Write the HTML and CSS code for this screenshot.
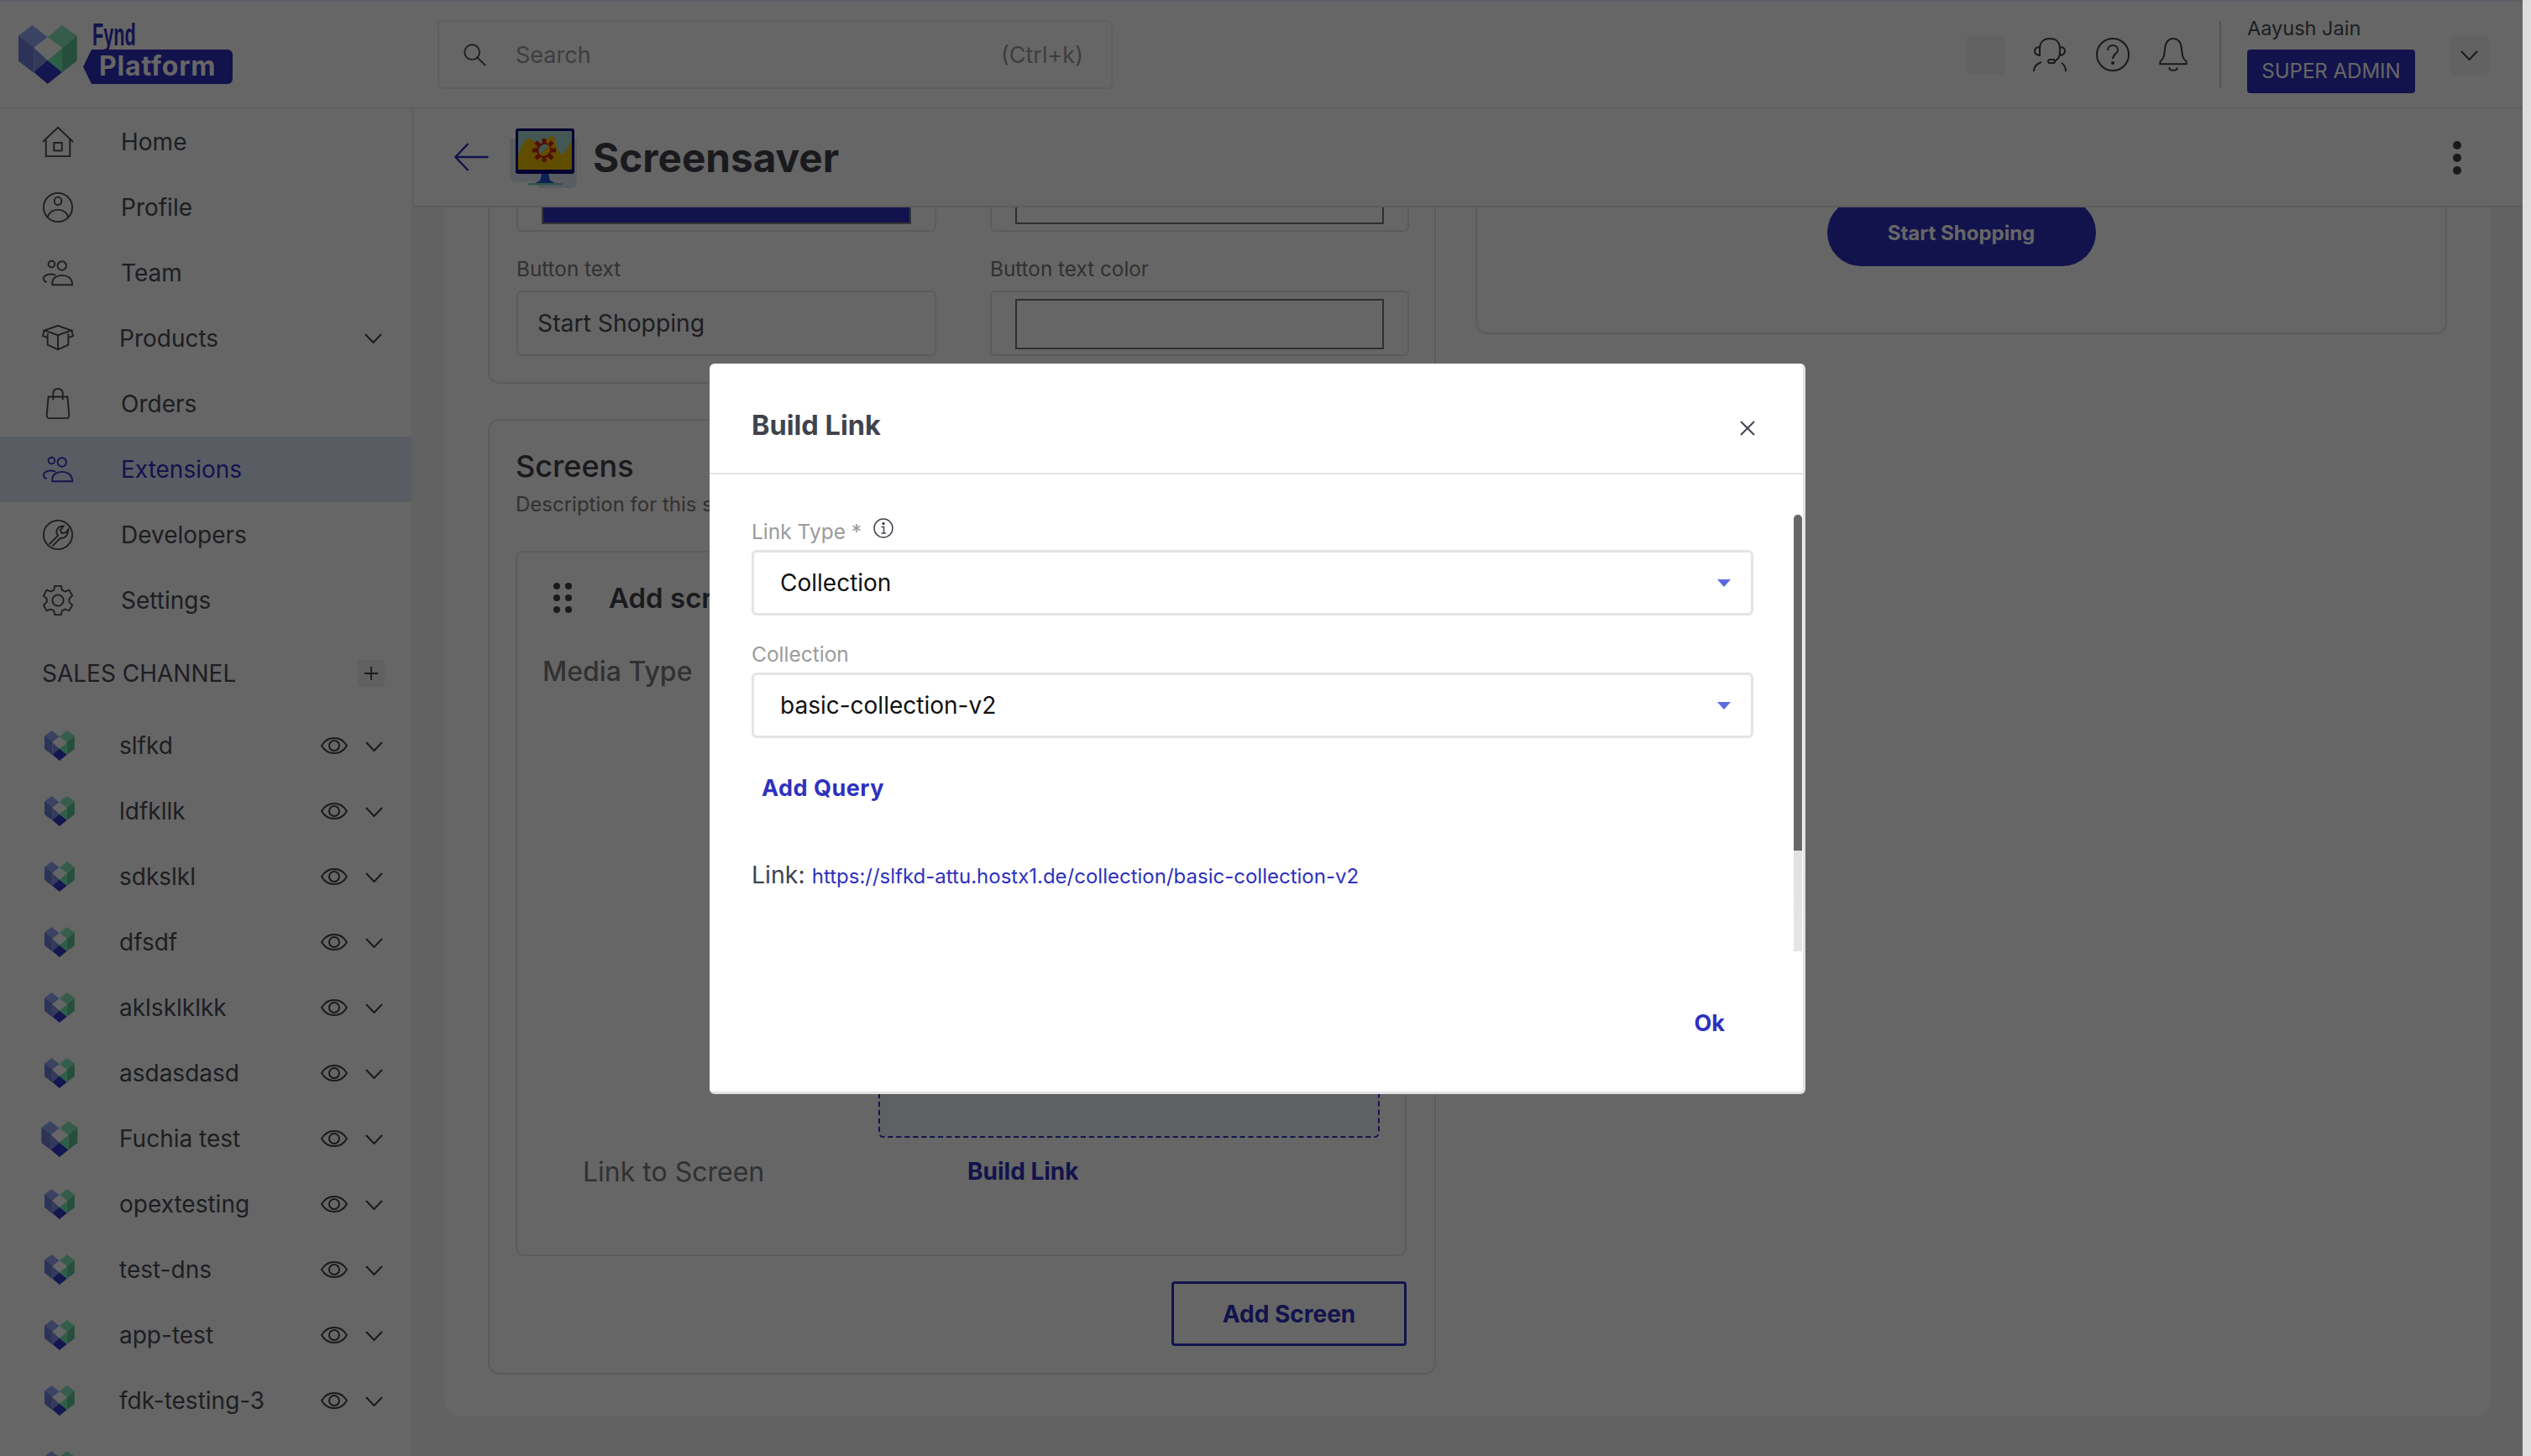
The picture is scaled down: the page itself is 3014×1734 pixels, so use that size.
FILE: index.html
```html
<!DOCTYPE html>
<html lang="en">
<head>
<meta charset="utf-8">
<title>Screensaver</title>
<link rel="stylesheet" href="styles.css">
</head>
<body>
<svg class="defs" width="0" height="0" aria-hidden="true">
  <symbol id="heart" viewBox="0 0 210 210">
    <path class="h1" d="M0 38 49 0 104 43 55 80 0 128Z"/>
    <path class="h2" d="M0 38 55 80 55 170 0 128Z"/>
    <path class="h3" d="M55 80 104 125 55 170Z"/>
    <path class="h4" d="M55 168 104 125 156 168 104 210Z"/>
    <path class="h5" d="M104 43 156 0 209 38 156 82Z"/>
    <path class="h6" d="M156 82 209 38 209 128 156 168Z"/>
    <path class="h7" d="M104 125 156 82 156 168Z"/>
    <path class="h8" d="M56 81 104 43 156 81 104 125Z"/>
  </symbol>
  <symbol id="eye" viewBox="0 0 32 22"><path d="M1 11C8-1 24-1 31 11 24 23 8 23 1 11Z"/><circle cx="16" cy="11" r="6"/></symbol>
  <symbol id="chev" viewBox="0 0 21 12"><path d="M1 1 10.500 11 20 1"/></symbol>
  <symbol id="people" viewBox="0 0 40 34"><circle cx="12" cy="6" r="4"/><circle cx="25" cy="8" r="5.500"/><path d="M6 28H4C1 26 1 22 5 20 8 18 14 18 17 20"/><path d="M13 32C12 23 19 20 25 20S38 23 38 32Z"/></symbol>
</svg>

<div class="app">
  <header class="top">
    <div class="logo">
      <svg class="logo-heart"><use href="#heart"/></svg>
      <div class="logo-text">
        <span class="fynd">Fynd</span>
        <span class="tag">Platform</span>
      </div>
    </div>
    <div class="search">
      <svg class="search-icon" viewBox="0 0 32 32"><circle cx="13" cy="13" r="9.500"/><path d="M20 20 30 30"/></svg>
      <span class="search-text">Search</span>
      <span class="search-key">(Ctrl+k)</span>
    </div>
    <div class="top-right">
      <span class="ghost"></span>
      <svg class="top-icon support" viewBox="0 0 40 40"><path d="M8 17V13C8 5 13 1 20 1S32 5 32 13V17C32 24 28 27 25 28"/><path d="M8 11C3 11 2 14 2 16S4 21 8 21V17M32 11C37 11 38 14 38 16S36 21 32 21V17"/><rect x="18" y="26" width="8" height="4" rx="2"/><path d="M1 40C1 34 4 31 10 29M39 40C39 34 37 32 34 30"/></svg>
      <svg class="top-icon help" viewBox="0 0 40 40"><circle cx="20" cy="20" r="19"/><path d="M14 15C14 11 17 9 20 9S26 11 26 15C26 19 20 19 20 25"/><circle class="solid" cx="20" cy="30" r="1"/></svg>
      <svg class="top-icon bell" viewBox="0 0 34 42"><path d="M1 32V29C6 25 6 21 7 12 8 5 11 1 17 1S26 5 27 12C28 21 28 25 33 29V32Z"/><path d="M12 36C12 41 22 41 22 36"/></svg>
      <span class="divider"></span>
      <div class="user">
        <span class="user-name">Aayush Jain</span>
        <span class="user-role">SUPER ADMIN</span>
      </div>
      <span class="ghost user-menu"><svg class="chev"><use href="#chev"/></svg></span>
    </div>
  </header>

  <div class="columns">
    <aside class="side">
      <nav class="nav">
        <a class="nav-row"><svg class="nav-icon" viewBox="0 0 40 40"><path d="M1 20 20 2 39 20M5 17V38H35V17"/><rect x="15" y="21" width="10" height="10"/></svg><span>Home</span></a>
        <a class="nav-row"><svg class="nav-icon" viewBox="0 0 40 40"><circle cx="20" cy="20" r="18"/><ellipse cx="20" cy="12" rx="4.500" ry="5"/><path d="M7 32C10 24 15 23 20 23S30 24 33 32"/></svg><span>Profile</span></a>
        <a class="nav-row"><svg class="nav-icon"><use href="#people"/></svg><span>Team</span></a>
        <a class="nav-row nudged"><svg class="nav-icon" viewBox="0 0 40 34"><path d="M20 1 37 7 20 13 3 7Z"/><path d="M3 7 1 14 7 16M37 7 39 14 33 16M7 11V25L20 31 33 25V11M20 13V31"/></svg><span>Products</span><svg class="chev nav-chev"><use href="#chev"/></svg></a>
        <a class="nav-row"><svg class="nav-icon" viewBox="0 0 40 40"><path d="M8 11H32L34 34C34 36 33 38 31 38H9C7 38 6 36 6 34Z"/><path d="M14 15V7C14 3 16 1 20 1S26 3 26 7V15"/></svg><span>Orders</span></a>
        <a class="nav-row active"><svg class="nav-icon"><use href="#people"/></svg><span>Extensions</span></a>
        <a class="nav-row"><svg class="nav-icon" viewBox="0 0 40 40"><circle cx="20" cy="20" r="18"/><path d="M9 32 20 21C16 15 20 9 27 9L23 14 25 18 30 17 33 13C33 21 28 25 23 24L13 34"/></svg><span>Developers</span></a>
        <a class="nav-row"><svg class="nav-icon" viewBox="0 0 40 40"><circle cx="20" cy="20" r="7"/><path d="M16 2H24L25 7 29 9 34 7 38 14 34 18V22L38 26 34 33 29 31 25 33 24 38H16L15 33 11 31 6 33 2 26 6 22V18L2 14 6 7 11 9 15 7Z"/></svg><span>Settings</span></a>
      </nav>
      <div class="channel-head">
        <span>SALES CHANNEL</span>
        <span class="plus"><svg viewBox="0 0 20 20"><path d="M10 1V19M1 10H19"/></svg></span>
      </div>
      <ul class="channels">
        <li class="chan"><svg class="chan-heart"><use href="#heart"/></svg><span class="chan-name">slfkd</span><svg class="eye"><use href="#eye"/></svg><svg class="chev"><use href="#chev"/></svg></li>
        <li class="chan"><svg class="chan-heart"><use href="#heart"/></svg><span class="chan-name">ldfkllk</span><svg class="eye"><use href="#eye"/></svg><svg class="chev"><use href="#chev"/></svg></li>
        <li class="chan"><svg class="chan-heart"><use href="#heart"/></svg><span class="chan-name">sdkslkl</span><svg class="eye"><use href="#eye"/></svg><svg class="chev"><use href="#chev"/></svg></li>
        <li class="chan"><svg class="chan-heart"><use href="#heart"/></svg><span class="chan-name">dfsdf</span><svg class="eye"><use href="#eye"/></svg><svg class="chev"><use href="#chev"/></svg></li>
        <li class="chan"><svg class="chan-heart"><use href="#heart"/></svg><span class="chan-name">aklsklklkk</span><svg class="eye"><use href="#eye"/></svg><svg class="chev"><use href="#chev"/></svg></li>
        <li class="chan"><svg class="chan-heart"><use href="#heart"/></svg><span class="chan-name">asdasdasd</span><svg class="eye"><use href="#eye"/></svg><svg class="chev"><use href="#chev"/></svg></li>
        <li class="chan big"><svg class="chan-heart"><use href="#heart"/></svg><span class="chan-name">Fuchia test</span><svg class="eye"><use href="#eye"/></svg><svg class="chev"><use href="#chev"/></svg></li>
        <li class="chan"><svg class="chan-heart"><use href="#heart"/></svg><span class="chan-name">opextesting</span><svg class="eye"><use href="#eye"/></svg><svg class="chev"><use href="#chev"/></svg></li>
        <li class="chan"><svg class="chan-heart"><use href="#heart"/></svg><span class="chan-name">test-dns</span><svg class="eye"><use href="#eye"/></svg><svg class="chev"><use href="#chev"/></svg></li>
        <li class="chan"><svg class="chan-heart"><use href="#heart"/></svg><span class="chan-name">app-test</span><svg class="eye"><use href="#eye"/></svg><svg class="chev"><use href="#chev"/></svg></li>
        <li class="chan"><svg class="chan-heart"><use href="#heart"/></svg><span class="chan-name">fdk-testing-3</span><svg class="eye"><use href="#eye"/></svg><svg class="chev"><use href="#chev"/></svg></li>
        <li class="chan"><svg class="chan-heart"><use href="#heart"/></svg></li>
      </ul>
    </aside>

    <main class="main">
      <div class="subhead">
        <svg class="back" viewBox="0 0 42 34"><path d="M17 1 2 17 17 33M2 17H41"/></svg>
        <svg class="screen-icon" viewBox="0 0 80 72">
          <path class="s-blob" d="M0 12H76C80 12 80 14 80 18V60C80 68 78 71 72 71H34V63H8C2 63 0 60 0 54Z"/>
          <rect class="s-frame" x="7" y="0" width="70" height="54" rx="3"/>
          <rect class="s-sky" x="10" y="3" width="64" height="46"/>
          <path class="s-sand" d="M10 46V32C14 22 17 12 24 12 29 12 30 20 36 20 42 20 44 9 50 9 56 9 55 30 62 30 68 30 71 18 74 13V46C74 48 73 49 71 49H13C11 49 10 48 10 46Z"/>
          <path class="s-stand" d="M38 54H46L48 62 54 65H30L36 62Z"/>
          <rect class="s-base" x="22" y="65" width="41" height="2.500" rx="1"/>
          <circle class="s-gear" cx="41" cy="26" r="9"/>
          <path class="s-teeth" d="M41 12V40M27 26H55M31 16 51 36M51 16 31 36"/>
          <path class="s-hole" d="M47 20 36 31C33 27 34 20 41 19 43 19 45 19 47 20Z"/>
          <path class="s-holeb" d="M47 20C49 24 48 29 44 32 41 33 38 33 36 31Z"/>
        </svg>
        <h1 class="page-title">Screensaver</h1>
        <span class="kebab"><i></i><i></i><i></i></span>
      </div>
      <div class="scroll">
        <div class="panel">
          <div class="left-col">
            <section class="card form-card">
              <div class="form-grid">
                <div class="field"><span class="swatch swatch-blue"></span></div>
                <div class="field"><span class="swatch"></span></div>
                <div class="field-block"><label class="f-label">Button text</label><div class="field field-text">Start Shopping</div></div>
                <div class="field-block"><label class="f-label">Button text color</label><div class="field"><span class="swatch swatch-tall"></span></div></div>
              </div>
            </section>
            <section class="card screens-card">
              <h2 class="screens-title">Screens</h2>
              <p class="screens-desc">Description for this screen</p>
              <div class="screen-box">
                <div class="screen-head">
                  <span class="grip"><i></i><i></i><i></i><i></i><i></i><i></i></span>
                  <span class="screen-name">Add screen</span>
                </div>
                <div class="media-row">
                  <span class="media-label">Media Type</span>
                  <div class="dropzone"></div>
                </div>
                <div class="link-row">
                  <span class="link-label">Link to Screen</span>
                  <a class="build-link">Build Link</a>
                </div>
              </div>
              <div class="screens-foot"><button class="add-screen">Add Screen</button></div>
            </section>
          </div>
          <section class="card preview-card"><span class="shop-btn">Start Shopping</span></section>
        </div>
      </div>
    </main>
  </div>

  <div class="overlay"></div>
  <div class="page-bar"></div>

  <div class="modal">
    <div class="modal-head">
      <h3 class="modal-title">Build Link</h3>
      <svg class="modal-close" viewBox="0 0 18 18"><path d="M1 1 17 17M17 1 1 17"/></svg>
    </div>
    <div class="modal-body">
      <div class="m-label m-first"><span>Link Type *</span>
        <svg class="info" viewBox="0 0 24 24"><circle cx="12" cy="12" r="11"/><path d="M9.500 10.500H12.500V18M9.500 18H15"/><circle class="solid" cx="12" cy="6.500" r="1"/></svg>
      </div>
      <div class="select"><span>Collection</span><i class="caret"></i></div>
      <div class="m-label"><span>Collection</span></div>
      <div class="select"><span>basic-collection-v2</span><i class="caret"></i></div>
      <a class="add-query">Add Query</a>
      <p class="link-line">Link: <a class="link-url">https://slfkd-attu.hostx1.de/collection/basic-collection-v2</a></p>
      <div class="modal-foot"><a class="ok">Ok</a></div>
    </div>
    <div class="m-scroll"><span class="m-thumb"></span></div>
  </div>
</div>
</body>
</html>
```

FILE: styles.css
```css
* { box-sizing: border-box; }
html, body { margin: 0; padding: 0; }
body { font-family: Inter, "Noto Sans", "Liberation Sans", sans-serif; color: #4a4c55; background: #fff; overflow: hidden; }
.defs { position: absolute; }
svg { display: block; fill: none; stroke: currentColor; stroke-width: 2; }
.solid { fill: currentColor; }
.h1 { fill: #93A8F5; stroke: none; } .h2 { fill: #6F80D8; stroke: none; } .h3 { fill: #8094E6; stroke: none; }
.h4 { fill: #3237C8; stroke: none; } .h5 { fill: #88E8BC; stroke: none; } .h6 { fill: #5CC49A; stroke: none; }
.h7 { fill: #6FEFB0; stroke: none; } .h8 { fill: #fff; stroke: none; }

.app { position: relative; width: 3014px; height: 1734px; overflow: hidden; display: flex; flex-direction: column; }

/* top bar */
.top { height: 130px; flex: none; display: flex; align-items: center; background: #fff; border-top: 2px solid #eaeaff; border-bottom: 2px solid #ededed; padding-right: 10px; }
.logo { width: 521px; flex: none; display: flex; padding-left: 22px; align-items: flex-start; }
.logo-heart { width: 70px; height: 70px; }
.logo-text { display: flex; flex-direction: column; margin-left: 7px; margin-top: -4px; }
.fynd { font-family: "Liberation Sans", sans-serif; font-weight: 700; font-size: 36px; line-height: 32px; height: 33px; color: #2e31be; margin-left: 11px; transform-origin: left center; transform: scaleX(.6); }
.tag { position: relative; width: 178px; height: 41px; background: #2e31be; color: #fff; border-radius: 0 6px 6px 0; clip-path: polygon(10px 0, 100% 0, 100% 100%, 10px 100%, 0 50%); font-family: Inter, sans-serif; font-weight: 700; font-size: 32px; line-height: 40px; padding-left: 19px; letter-spacing: .8px; }
.search { width: 804px; height: 82px; flex: none; display: flex; align-items: center; border: 2px solid #ededed; border-radius: 6px; padding: 0 33px 0 27px; font-size: 27px; color: #9b9b9b; }
.search-icon { width: 30px; height: 30px; color: #4a4c55; }
.search-text { margin-left: 34px; flex: 1; }
.top-right { flex: 1; display: flex; align-items: center; padding-left: 1016px; }
.ghost { width: 47px; height: 47px; flex: none; background: #f6f6f6; border-radius: 6px; }
.top-icon { flex: none; height: 40px; color: #3f4148; }
.support { width: 40px; margin-left: 33px; }
.help { width: 40px; margin-left: 35px; }
.bell { width: 34px; height: 41px; margin-left: 35px; }
.divider { width: 2px; height: 80px; background: #cfcfcf; margin-left: 38px; flex: none; }
.user { display: flex; flex-direction: column; margin-left: 31px; width: 200px; flex: none; }
.user-name { font-size: 23.500px; line-height: 30px; color: #4a4c55; }
.user-role { margin-top: 10px; height: 52px; background: #2e31be; color: #fff; border-radius: 4px; font-size: 24px; line-height: 52px; text-align: center; }
.user-menu { margin-left: 41px; height: 48px; display: flex; align-items: center; justify-content: center; margin-top: 1px; }

.columns { flex: 1; display: flex; min-height: 0; }

/* sidebar */
.side { width: 493px; flex: none; background: #fff; border-right: 3px solid #f2f2f2; overflow: hidden; }
.nav { padding-top: 0; }
.nav-row { height: 78px; display: flex; align-items: center; padding-left: 50px; font-size: 28px; color: #4a4c55; }
.nav-row > span { margin-left: 56px; flex: 1; }
.nav-icon { width: 38px; height: 38px; flex: none; }
.nudged > span { margin-left: 54px; }
.nav-chev { margin-right: 35px; }
.active { background: #e1e6f7; color: #2e31be; }
.chev { width: 21px; height: 12px; flex: none; color: #3f4148; }
.channel-head { display: flex; align-items: center; justify-content: space-between; height: 32px; margin-top: 32px; padding: 0 32px 0 50px; font-size: 28px; color: #4a4c55; }
.plus { width: 32px; height: 32px; background: #f0f0f0; border-radius: 4px; display: flex; align-items: center; justify-content: center; color: #3f4148; }
.plus svg { width: 18px; height: 18px; }
.channels { list-style: none; margin: 31px 0 0; padding: 0; }
.chan { height: 78px; display: flex; align-items: center; padding-left: 52px; font-size: 28px; }
.chan .h1 { fill: #9484F0; } .chan .h2 { fill: #7869DC; } .chan .h3 { fill: #8878E8; } .chan .h4 { fill: #7150E8; }
.chan .h5 { fill: #80DCE4; } .chan .h6 { fill: #48B8C8; } .chan .h7 { fill: #58C8D4; }
.chan.big .h1 { fill: #93A8F5; } .chan.big .h2 { fill: #6F80D8; } .chan.big .h3 { fill: #8094E6; } .chan.big .h4 { fill: #2A2FD8; }
.chan.big .h5 { fill: #88E8BC; } .chan.big .h6 { fill: #5CC49A; } .chan.big .h7 { fill: #6FEFB0; }
.chan-heart { width: 38px; height: 36px; flex: none; }
.chan.big { padding-left: 49px; }
.chan.big .chan-heart { width: 44px; height: 43px; }
.chan-name { flex: 1; margin-left: 52px; }
.chan.big .chan-name { margin-left: 49px; }
.eye { width: 32px; height: 22px; flex: none; color: #3f4148; }
.chan .chev { margin: 2px 34px 0 21px; }

/* main */
.main { flex: 1; display: flex; flex-direction: column; min-width: 0; margin-right: 10px; background: #f5f5f5; }
.subhead { height: 117px; flex: none; position: relative; z-index: 2; display: flex; align-items: center; background: #fff; border-bottom: 2px solid #e6e6e6; padding-left: 47px; }
.back { width: 43px; height: 34px; color: #2e31be; stroke-width: 2.500; margin-top: -1px; }
.screen-icon { width: 80px; height: 72px; margin-left: 24px; margin-top: 2px; flex: none; stroke: none; }
.screen-icon * { stroke: none; }
.s-blob { fill: #dfe6f2; } .s-frame { fill: #0b0078; } .s-sky { fill: #a8dcd4; } .s-sand { fill: #f2c100; }
.s-stand { fill: #2050d8; } .s-base { fill: #7fd0c0; }
.s-gear { fill: #ce2a00; } .screen-icon .s-teeth { stroke: #ce2a00; stroke-width: 5; fill: none; }
.s-hole { fill: #a8dcd4; } .s-holeb { fill: #f2c100; }
.page-title { margin: 0 0 0 19px; font-size: 47.700px; font-weight: 700; color: #41434c; flex: 1; line-height: 56px; }
.kebab { display: flex; flex-direction: column; gap: 5px; margin-right: 73px; }
.kebab i { width: 10px; height: 10px; border-radius: 50%; background: #41434c; }

.scroll { flex: 1; overflow: hidden; min-height: 0; }
.panel { margin: -60px 38px 0 36px; padding: 0 52px 50px; background: #fff; border-radius: 20px; display: grid; grid-template-columns: 1129px 1157px; gap: 47px; align-items: start; }
.left-col { display: flex; flex-direction: column; gap: 42px; }
.card { border: 2px solid #e6e6e6; border-radius: 14px; background: #fff; }

.form-card { padding: 8px 30px 31px 32px; }
.form-grid { display: grid; grid-template-columns: 500px 499px; column-gap: 64px; row-gap: 29px; }
.field { height: 79px; border: 2px solid #e6e6e6; border-radius: 6px; padding: 8px 28px; background: #fff; }
.field-block .field { height: 78px; }
.field-text { display: flex; align-items: center; padding: 0 23px; font-size: 28.300px; color: #4a4c55; }
.swatch { display: block; height: 60px; border: 2px solid #777; background: #fff; }
.swatch-blue { background: #2e31be; border-color: #888; }
.f-label { display: block; font-size: 24.300px; line-height: 30px; color: #7a7a7a; margin-bottom: 11px; }

.screens-card { height: 1138px; padding: 32px 33px 0 31px; }
.screens-title { margin: 0; font-size: 36px; line-height: 44px; font-weight: 500; color: #41434c; }
.screens-desc { margin: 9px 0 0; font-size: 24px; line-height: 30px; color: #7a7a7a; }
.screen-box { margin-top: 40px; height: 840px; border: 2px solid #e6e6e6; border-radius: 10px; padding-top: 34px; }
.screen-head { display: flex; align-items: center; height: 40px; padding-left: 43px; }
.grip { display: grid; grid-template-columns: 8px 8px; gap: 6px 6px; width: 22px; }
.grip i { width: 8px; height: 8px; border-radius: 50%; background: #41434c; }
.screen-name { margin-left: 44px; font-size: 33px; font-weight: 600; color: #41434c; }
.media-row { display: flex; margin-top: 48px; padding-left: 30px; }
.media-label { width: 400px; flex: none; font-size: 32px; line-height: 40px; font-weight: 500; color: #7a7a7a; }
.dropzone { width: 597px; height: 575px; background: #eef0f8; border: 2px dashed #2e31be; border-radius: 6px; }
.link-row { display: flex; align-items: center; height: 40px; margin-top: 20px; padding-left: 78px; }
.link-label { width: 458px; flex: none; font-size: 32px; color: #7a7a7a; }
.build-link { font-size: 28px; font-weight: 700; color: #2e31be; }
.screens-foot { display: flex; justify-content: flex-end; margin-top: 30px; }
.add-screen { width: 280px; height: 77px; background: #fff; border: 3px solid #2e31be; border-radius: 4px; color: #2e31be; font-family: Inter, sans-serif; font-weight: 700; font-size: 28px; }

.preview-card { display: flex; justify-content: center; padding: 48px 0 79px; }
.shop-btn { width: 320px; height: 80px; border-radius: 40px; background: #2e31be; color: #fff; font-size: 24px; font-weight: 700; display: flex; align-items: center; justify-content: center; }

/* overlay + modal */
.overlay { position: absolute; inset: 0 10px 0 0; background: rgba(0, 0, 0, .6); z-index: 5; }
.page-bar { position: absolute; top: 0; right: 0; bottom: 0; width: 10px; background: #dedede; z-index: 5; }
.modal { position: absolute; left: 845px; top: 433px; width: 1305px; height: 870px; background: #fff; border-radius: 6px; border-right: 3px solid #e2e2e2; border-bottom: 3px solid #e2e2e2; z-index: 6; overflow: hidden; }
.modal-head { height: 132px; border-bottom: 2px solid #e4e4e4; display: flex; align-items: center; justify-content: space-between; padding: 24px 57px 0 50px; }
.modal-title { margin: 0; font-size: 32.500px; font-weight: 700; color: #41434c; margin-top: -8px; }
.modal-close { width: 18px; height: 18px; color: #41434c; }
.modal-body { padding: 53px 59px 0 50px; }
.m-label { display: flex; align-items: center; height: 30px; font-size: 24.500px; color: #9b9b9b; margin-bottom: 7px; }
.m-label:not(.m-first) { margin-top: 31px; }
.info { width: 24px; height: 24px; margin-left: 14px; margin-top: -8px; color: #41434c; stroke-width: 1.500; }
.select { height: 78px; border: 3px solid #e4e4e4; border-radius: 6px; display: flex; align-items: center; justify-content: space-between; padding: 0 24px 0 31px; font-size: 28px; color: #111; }
.caret { width: 0; height: 0; border: 8px solid transparent; border-top: 9px solid #5c6bdf; border-bottom: 0; }
.add-query { display: block; margin-top: 42px; padding-left: 12px; height: 36px; line-height: 36px; font-size: 27px; font-weight: 700; color: #2e31be; letter-spacing: .5px; }
.link-line { margin: 67px 0 0; height: 36px; line-height: 36px; font-size: 28.500px; color: #41434c; }
.link-url { font-size: 24px; color: #2e31be; }
.modal-foot { display: flex; justify-content: flex-end; margin-top: 141px; padding-right: 34px; }
.ok { font-size: 27px; font-weight: 700; color: #2e31be; line-height: 36px; }
.m-scroll { position: absolute; right: 1px; top: 180px; width: 10px; height: 520px; border-radius: 5px 5px 0 0; background: linear-gradient(#d0d0d0, #e6e6e6); }
.m-thumb { display: block; height: 400px; border-radius: 5px 5px 0 0; background: #686868; }
```
